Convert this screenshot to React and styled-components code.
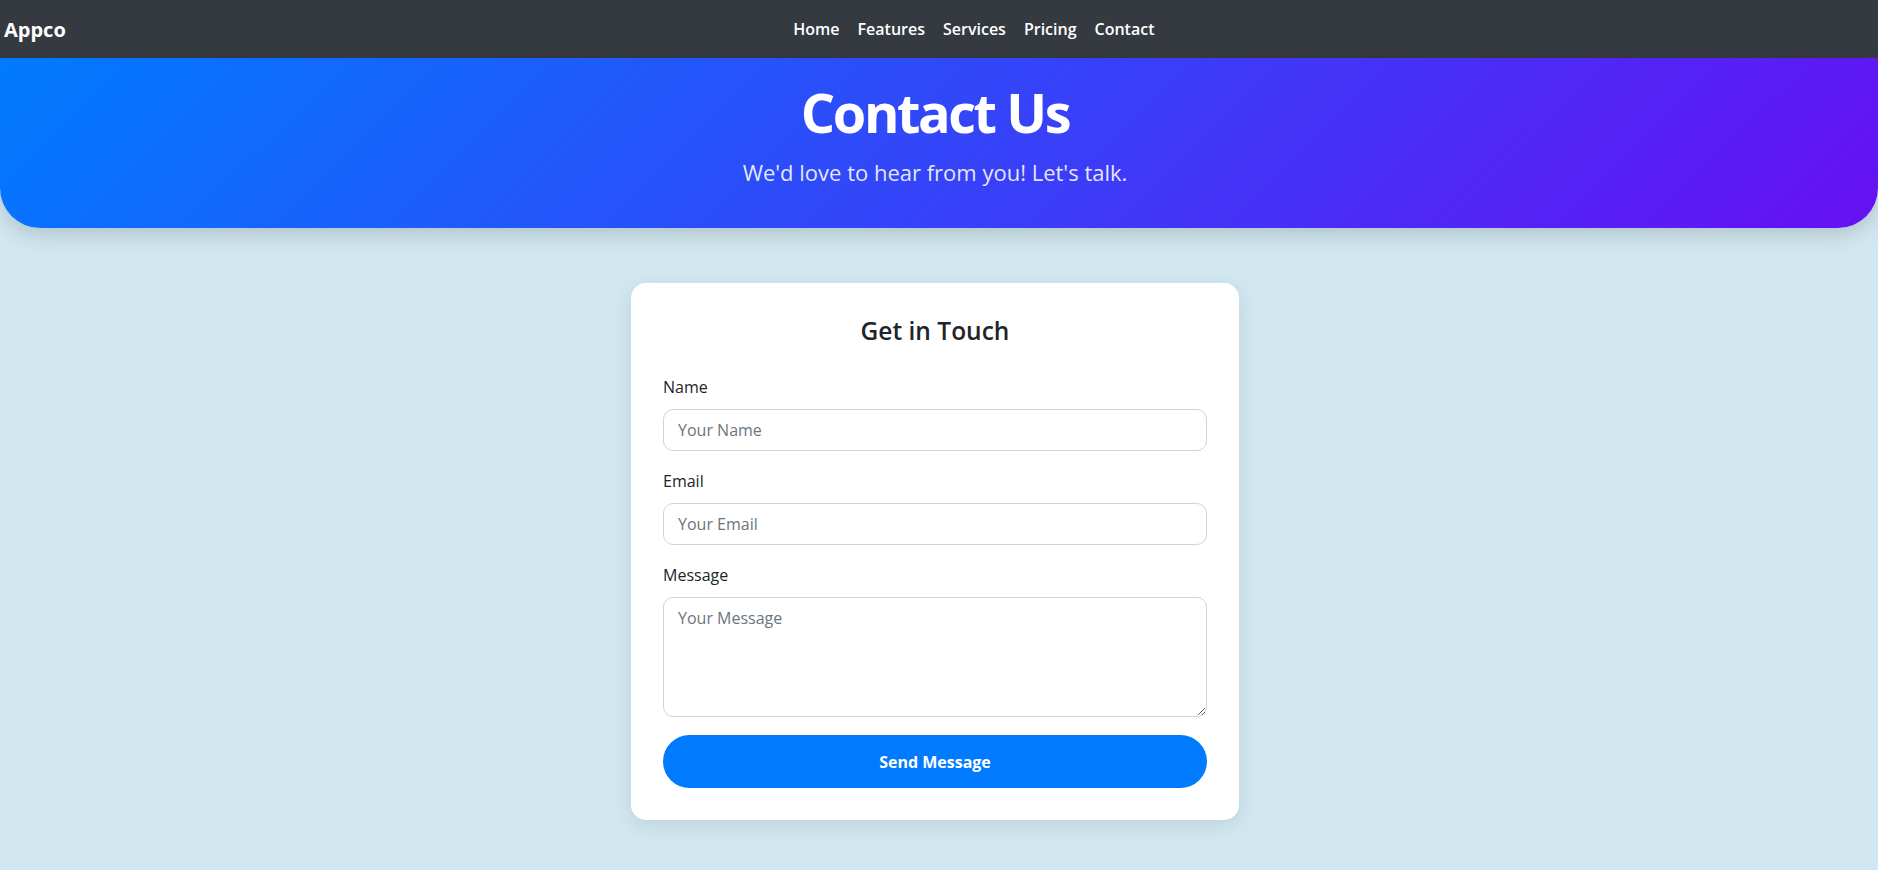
import React from "react";
import styled, { createGlobalStyle } from "styled-components";

const links = ["Home", "Features", "Services", "Pricing", "Contact"];

const GlobalStyle = createGlobalStyle`
  body {
    margin: 0;
    background: #d2e8f0;
    font-family: "Open Sans", "Noto Sans", sans-serif;
    color: #212529;
  }
`;

const Navbar = styled.nav`
  display: flex;
  align-items: center;
  height: 58px;
  padding: 0 4px;
  background: #343a40;
`;

const Brand = styled.a`
  color: #fff;
  font-size: 20px;
  font-weight: 700;
  text-decoration: none;
  margin-right: 8px;
`;

const NavList = styled.ul`
  display: flex;
  list-style: none;
  margin: 0 auto;
  padding: 0;
`;

const NavLink = styled.a`
  display: block;
  padding: 0 9px;
  color: #fff;
  font-size: 16px;
  font-weight: 600;
  text-decoration: none;
`;

const Hero = styled.header`
  padding: 22px 8px 39px 0;
  background: linear-gradient(135deg, #007bff, #6610f2);
  border-radius: 0 0 40px 40px;
  box-shadow: 0 8px 20px rgba(0, 0, 0, 0.15);
  color: #fff;
  text-align: center;
`;

const Title = styled.h1`
  margin: 0;
  font-size: 54px;
  font-weight: 700;
  line-height: 1.2;
  letter-spacing: -2.4px;
`;

const Lead = styled.p`
  margin: 11px 0 0;
  font-size: 22px;
  line-height: 1.5;
  color: rgba(255, 255, 255, 0.88);
`;

const Main = styled.main`
  display: flex;
  justify-content: center;
  padding: 55px 8px 48px 0;
`;

const Card = styled.form`
  width: 608px;
  box-sizing: border-box;
  padding: 32px;
  background: #fff;
  border-radius: 15px;
  box-shadow: 0 5px 20px rgba(0, 0, 0, 0.1);
`;

const CardTitle = styled.h3`
  margin: 0 0 30px;
  padding-top: 1px;
  font-size: 24.5px;
  font-weight: 600;
  line-height: 1.2;
  text-align: center;
  color: #212529;
`;

const Group = styled.div`
  margin-bottom: 18px;
`;

const Label = styled.label`
  display: block;
  margin-bottom: 10px;
  font-size: 16px;
  line-height: 1.5;
`;

const Input = styled.input`
  display: block;
  width: 100%;
  box-sizing: border-box;
  padding: 8px 14px;
  border: 1px solid #ced4da;
  border-radius: 10px;
  font: inherit;
  font-size: 16px;
  line-height: 1.5;
  color: #212529;
  &::placeholder {
    color: #6c757d;
  }
`;

const TextArea = styled(Input).attrs({ as: "textarea" })`
  height: 120px;
  resize: vertical;
`;

const SendButton = styled.button`
  display: block;
  width: 100%;
  height: 53px;
  border: none;
  border-radius: 27px;
  background: #007bff;
  color: #fff;
  font: inherit;
  font-size: 16px;
  font-weight: 700;
  cursor: pointer;
`;

const App = () => {
  return (
    <>
      <GlobalStyle />
      <Navbar>
        <Brand href="#">Appco</Brand>
        <NavList>
          {links.map((l) => (
            <li key={l}>
              <NavLink href="#">{l}</NavLink>
            </li>
          ))}
        </NavList>
      </Navbar>
      <Hero>
        <Title>Contact Us</Title>
        <Lead>We'd love to hear from you! Let's talk.</Lead>
      </Hero>
      <Main>
        <Card onSubmit={(e) => e.preventDefault()}>
          <CardTitle>Get in Touch</CardTitle>
          <Group>
            <Label htmlFor="name">Name</Label>
            <Input id="name" type="text" placeholder="Your Name" />
          </Group>
          <Group>
            <Label htmlFor="email">Email</Label>
            <Input id="email" type="email" placeholder="Your Email" />
          </Group>
          <Group>
            <Label htmlFor="message">Message</Label>
            <TextArea id="message" placeholder="Your Message" />
          </Group>
          <SendButton type="submit">Send Message</SendButton>
        </Card>
      </Main>
    </>
  );
};

export default App;
